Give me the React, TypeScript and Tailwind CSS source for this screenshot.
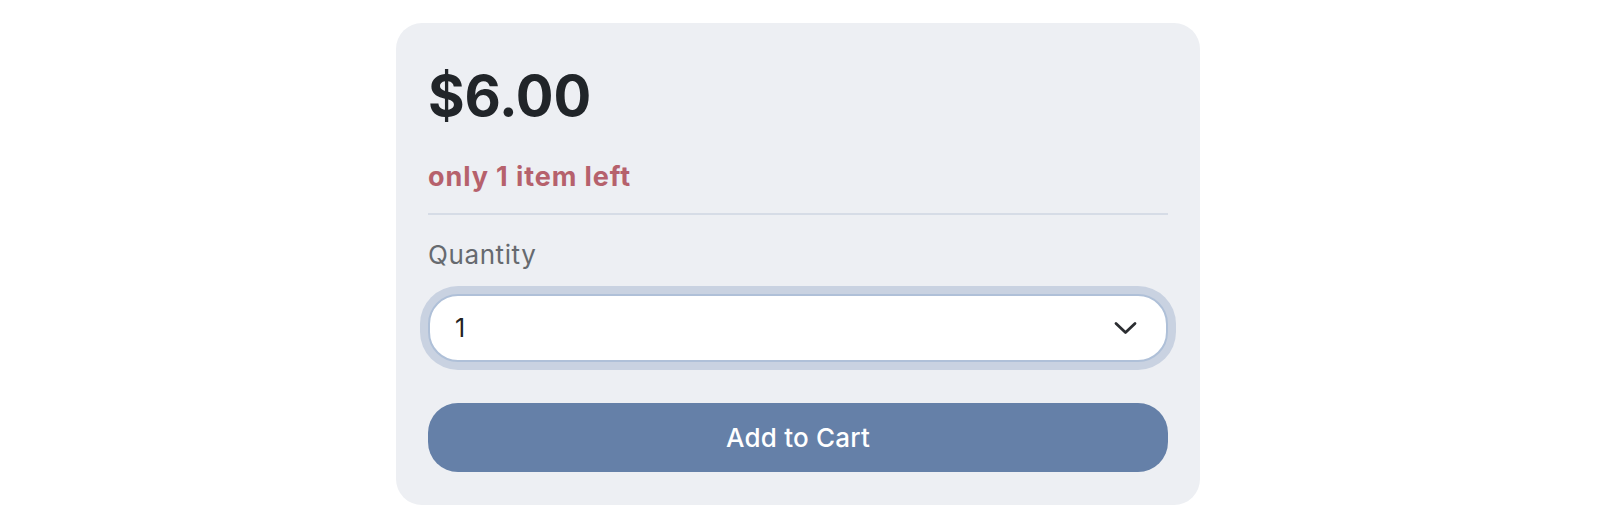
import React from 'react';

const ChevronDown: React.FC = () => (
  <svg width="23" height="14" viewBox="0 0 23 14" fill="none" aria-hidden="true">
    <path d="M2 2.5 L11.5 11.5 L21 2.5" stroke="#2b2d31" strokeWidth="2.8" strokeLinecap="round" strokeLinejoin="round" />
  </svg>
);

export default function App() {
  return (
    <div className="min-h-[530px] bg-white pt-[23px] font-['Inter','Noto_Sans',sans-serif]">
      <div className="ml-[396px] w-[804px] rounded-[26px] bg-[#edeff3] px-8 pb-[33px] pt-8">
        {/* Price */}
        <div className="text-[56px] font-bold leading-[82px] tracking-[-0.2px] text-[#212529]">$6.00</div>

        {/* Stock warning */}
        <div className="mt-[24px] text-[27px] font-bold leading-8 tracking-[0.9px] text-[#b6616c]">only 1 item left</div>

        <div className="mt-[20px] border-t-2 border-[#d6dce6]" />

        {/* Quantity */}
        <label className="mt-[24px] block text-[26px] leading-8 tracking-[0.6px] text-[#666a6f]">Quantity</label>

        <div className="mt-[23px] flex h-[68px] items-center justify-between rounded-[30px] border-2 border-[#afc0d8] bg-white pl-[25px] pr-[29px] shadow-[0_0_0_8px_#c9d2e1]">
          <span className="text-[25px] leading-8 text-[#222]">1</span>
          <ChevronDown />
        </div>

        <button className="mt-[41px] flex h-[69px] w-full items-center justify-center rounded-[30px] bg-[#6580a8] text-[26px] font-medium tracking-[0.2px] text-white">
          Add to Cart
        </button>
      </div>
    </div>
  );
}
